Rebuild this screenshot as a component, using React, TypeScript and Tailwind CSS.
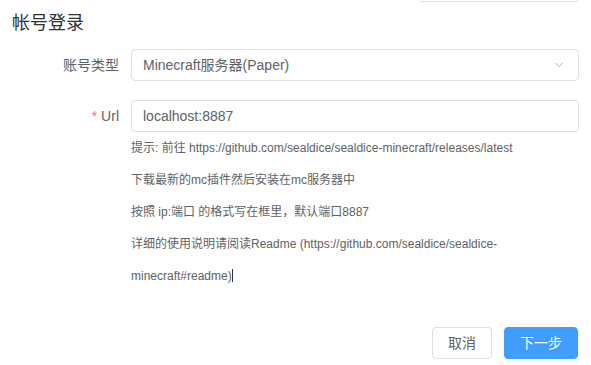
import { ChevronDown } from 'lucide-react'

const font = { fontFamily: '"Liberation Sans", "Noto Sans CJK SC", sans-serif' }

export default function App() {
  return (
    <div className="w-[591px] h-[365px] bg-white overflow-hidden text-[#606266]" style={font}>
      {/* bottom edge of the control above */}
      <div className="flex justify-end pr-[13px]">
        <div className="w-[158px] h-[2px] border-x border-b border-[#dcdfe6] rounded-b" />
      </div>

      <h2 className="pl-3 pt-[9px] text-[18px] leading-[24px] text-[#303133] font-normal">帐号登录</h2>

      {/* 账号类型 */}
      <div className="flex items-center mt-[14px]">
        <label className="w-[131px] pr-3 text-right text-sm">账号类型</label>
        <div className="w-[448px] h-8 border border-[#dcdfe6] rounded flex items-center justify-between px-[11px]">
          <span className="text-sm text-[#606266]">Minecraft服务器(Paper)</span>
          <ChevronDown size={14} strokeWidth={1.5} className="text-[#a8abb2] mr-[1px]" />
        </div>
      </div>

      {/* Url */}
      <div className="flex mt-[19px]">
        <label className="w-[131px] pr-3 text-right text-sm leading-8">
          <span className="text-[#f56c6c] mr-1">*</span>Url
        </label>
        <div className="w-[448px]">
          <div className="h-8 border border-[#dcdfe6] rounded flex items-center px-[11px]">
            <span className="text-sm text-[#606266]">localhost:8887</span>
          </div>
          <div className="text-xs leading-8 text-[#606266] whitespace-nowrap">
            <p>提示: 前往 https://github.com/sealdice/sealdice-minecraft/releases/latest</p>
            <p>下载最新的mc插件然后安装在mc服务器中</p>
            <p>按照 ip:端口 的格式写在框里，默认端口8887</p>
            <p>详细的使用说明请阅读Readme (https://github.com/sealdice/sealdice-</p>
            <p>
              minecraft#readme)
              <span className="inline-block w-px h-[13px] bg-[#303133] align-middle -mt-[2px]" />
            </p>
          </div>
        </div>
      </div>

      {/* footer */}
      <div className="flex justify-end gap-3 pr-[13px] mt-[35px]">
        <button className="h-8 px-[15px] border border-[#dcdfe6] rounded text-sm text-[#606266] bg-white">取消</button>
        <button className="h-8 px-[15px] border border-[#409eff] rounded text-sm text-white bg-[#409eff]">下一步</button>
      </div>
    </div>
  )
}
